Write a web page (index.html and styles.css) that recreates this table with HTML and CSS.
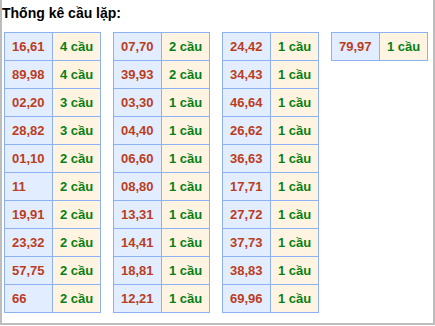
FILE: index.html
```html
<!DOCTYPE html>
<html>
<head>
<meta charset="utf-8">
<link rel="stylesheet" href="styles.css">
</head>
<body>
<div class="box">
  <div class="title">Thống kê cầu lặp:</div>
  <div class="tables">
    <table class="tk">
      <tr><td class="num">16,61</td><td class="cnt">4 cầu</td></tr>
      <tr><td class="num">89,98</td><td class="cnt">4 cầu</td></tr>
      <tr><td class="num">02,20</td><td class="cnt">3 cầu</td></tr>
      <tr><td class="num">28,82</td><td class="cnt">3 cầu</td></tr>
      <tr><td class="num">01,10</td><td class="cnt">2 cầu</td></tr>
      <tr><td class="num">11</td><td class="cnt">2 cầu</td></tr>
      <tr><td class="num">19,91</td><td class="cnt">2 cầu</td></tr>
      <tr><td class="num">23,32</td><td class="cnt">2 cầu</td></tr>
      <tr><td class="num">57,75</td><td class="cnt">2 cầu</td></tr>
      <tr><td class="num">66</td><td class="cnt">2 cầu</td></tr>
    </table>
    <table class="tk">
      <tr><td class="num">07,70</td><td class="cnt">2 cầu</td></tr>
      <tr><td class="num">39,93</td><td class="cnt">2 cầu</td></tr>
      <tr><td class="num">03,30</td><td class="cnt">1 cầu</td></tr>
      <tr><td class="num">04,40</td><td class="cnt">1 cầu</td></tr>
      <tr><td class="num">06,60</td><td class="cnt">1 cầu</td></tr>
      <tr><td class="num">08,80</td><td class="cnt">1 cầu</td></tr>
      <tr><td class="num">13,31</td><td class="cnt">1 cầu</td></tr>
      <tr><td class="num">14,41</td><td class="cnt">1 cầu</td></tr>
      <tr><td class="num">18,81</td><td class="cnt">1 cầu</td></tr>
      <tr><td class="num">12,21</td><td class="cnt">1 cầu</td></tr>
    </table>
    <table class="tk">
      <tr><td class="num">24,42</td><td class="cnt">1 cầu</td></tr>
      <tr><td class="num">34,43</td><td class="cnt">1 cầu</td></tr>
      <tr><td class="num">46,64</td><td class="cnt">1 cầu</td></tr>
      <tr><td class="num">26,62</td><td class="cnt">1 cầu</td></tr>
      <tr><td class="num">36,63</td><td class="cnt">1 cầu</td></tr>
      <tr><td class="num">17,71</td><td class="cnt">1 cầu</td></tr>
      <tr><td class="num">27,72</td><td class="cnt">1 cầu</td></tr>
      <tr><td class="num">37,73</td><td class="cnt">1 cầu</td></tr>
      <tr><td class="num">38,83</td><td class="cnt">1 cầu</td></tr>
      <tr><td class="num">69,96</td><td class="cnt">1 cầu</td></tr>
    </table>
    <table class="tk">
      <tr><td class="num">79,97</td><td class="cnt">1 cầu</td></tr>
    </table>
  </div>
</div>
</body>
</html>
```
FILE: styles.css
```css
html, body {
  margin: 0;
  padding: 0;
  background: #fff;
}
.box {
  box-sizing: border-box;
  width: 435px;
  height: 325px;
  border: 2px solid #bdbdbd;
  border-top: none;
  font-family: "Liberation Sans", Arial, sans-serif;
}
.title {
  font-size: 14px;
  font-weight: bold;
  color: #000;
  height: 32px;
  line-height: 26px;
}
.tables {
  display: flex;
  align-items: flex-start;
  gap: 12px;
  padding-left: 2px;
}
.tk {
  border-collapse: collapse;
  font-size: 13px;
  font-weight: bold;
}
.tk td {
  border: 1px solid #8cb2f4;
  height: 28px;
  padding: 0 0 0 7px;
  box-sizing: border-box;
  vertical-align: middle;
  line-height: 15px;
}
.num {
  width: 48px;
  background: #e2edff;
  color: #bb3d1c;
}
.cnt {
  width: 48px;
  background: #fff4e1;
  color: #067f14;
}
```
